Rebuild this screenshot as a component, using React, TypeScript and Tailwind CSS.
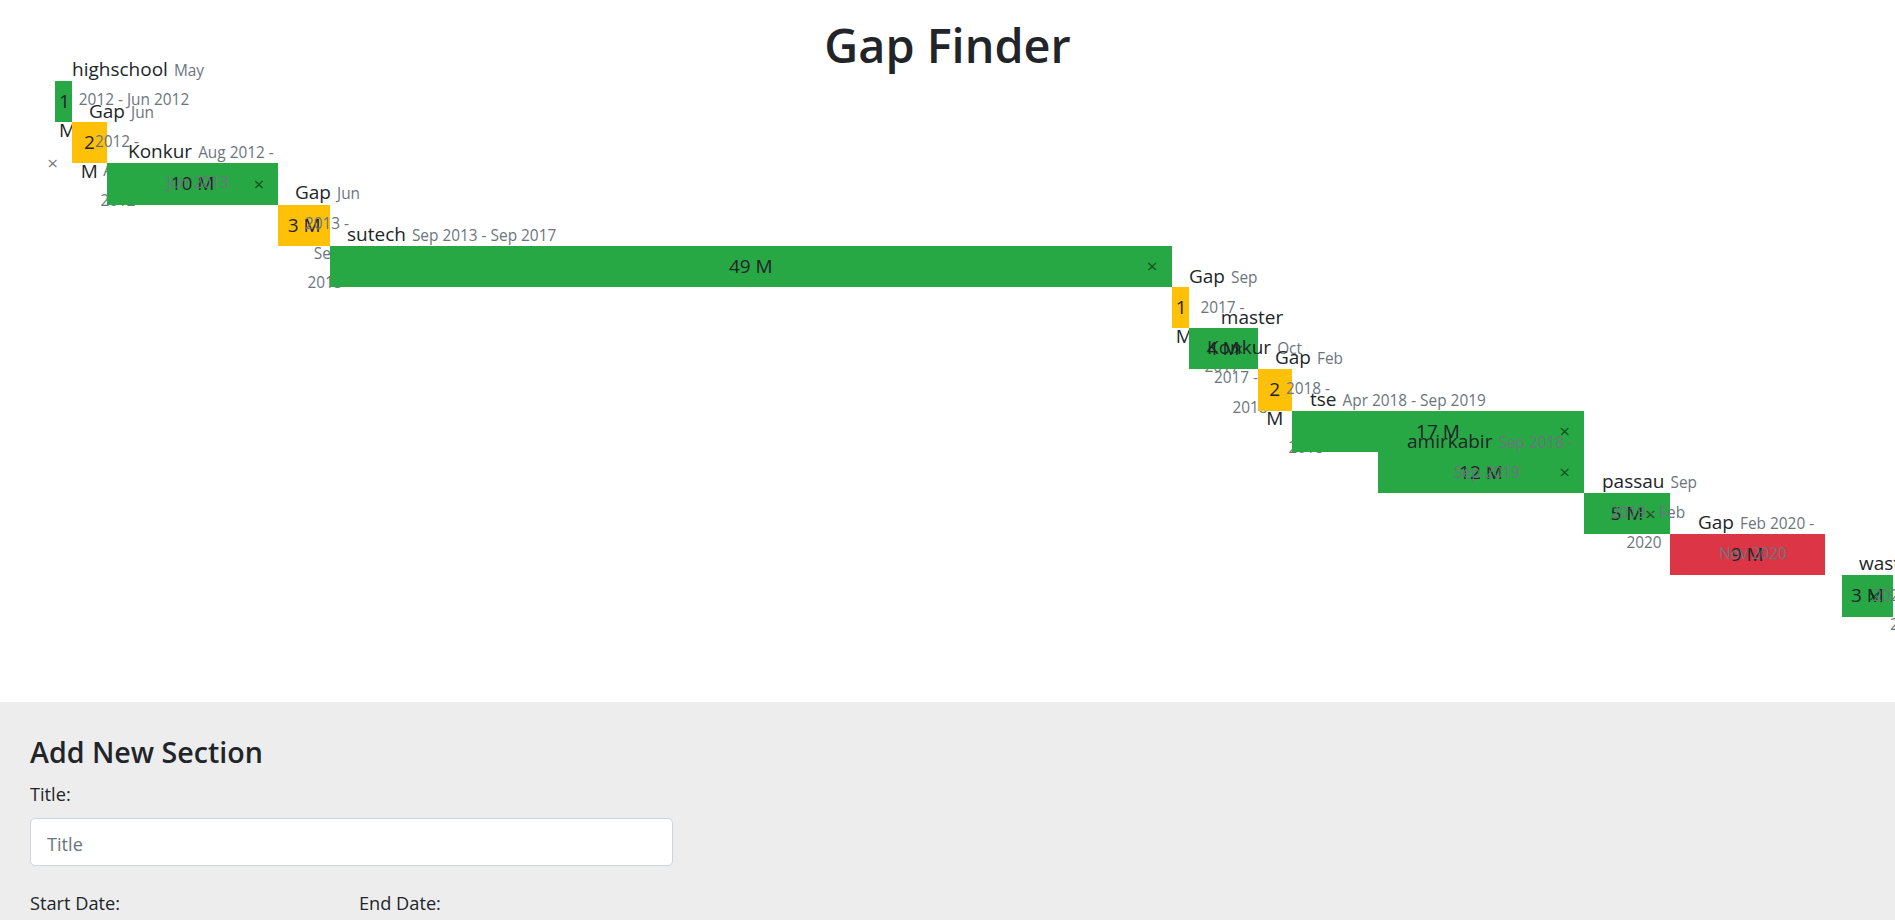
import React from 'react';

// chart scale, measured from the timeline
const PX_PER_MONTH = 17.18;
const X0 = 55;
const ROW_H = 41.2;
const ROW0 = 9; // first bar top inside the canvas
const CANVAS_TOP = 72; // canvas starts below the heading
const BASELINE = 20; // baseline offset inside a 29px line box

type Line = { x: number; y: number; center: boolean; title: string; date: string };
type Tone = 'section' | 'gap' | 'bad';
type Item = { m: number; len: number; tone: Tone; closeY?: number; lines: Line[] };

const L = (x: number, y: number, center: boolean, title: string, date: string): Line => ({
  x,
  y,
  center,
  title,
  date,
});

const ITEMS: Item[] = [
  {
    m: 0,
    len: 1,
    tone: 'section',
    closeY: 163,
    lines: [L(72, 75, false, 'highschool', 'May'), L(134, 104, true, '', '2012 - Jun 2012')],
  },
  {
    m: 1,
    len: 2,
    tone: 'gap',
    lines: [
      L(89, 117, false, 'Gap', 'Jun'),
      L(117, 146, true, '', '2012 -'),
      L(117, 175, true, '', 'Aug'),
      L(118, 205, true, '', '2012'),
    ],
  },
  {
    m: 3,
    len: 10,
    tone: 'section',
    lines: [L(128, 157, false, 'Konkur', 'Aug 2012 -'), L(197.5, 187, true, '', 'Jun 2013')],
  },
  {
    m: 13,
    len: 3,
    tone: 'gap',
    lines: [
      L(295, 198, false, 'Gap', 'Jun'),
      L(327, 228, true, '', '2013 -'),
      L(327, 258, true, '', 'Sep'),
      L(325, 287, true, '', '2013'),
    ],
  },
  {
    m: 16,
    len: 49,
    tone: 'section',
    lines: [L(347, 240, false, 'sutech', 'Sep 2013 - Sep 2017')],
  },
  {
    m: 65,
    len: 1,
    tone: 'gap',
    lines: [
      L(1189, 282, false, 'Gap', 'Sep'),
      L(1222.5, 312, true, '', '2017 -'),
      L(1222, 341, true, '', 'Oct'),
      L(1222, 371, true, '', '2017'),
    ],
  },
  {
    m: 66,
    len: 4,
    tone: 'section',
    lines: [
      L(1252, 323, true, 'master', ''),
      L(1207, 353, false, 'Konkur', 'Oct'),
      L(1251, 382, true, '', '2017 - Feb'),
      L(1250, 412, true, '', '2018'),
    ],
  },
  {
    m: 70,
    len: 2,
    tone: 'gap',
    lines: [
      L(1275, 363, false, 'Gap', 'Feb'),
      L(1308, 393, true, '', '2018 -'),
      L(1308, 422, true, '', 'Apr'),
      L(1306, 452, true, '', '2018'),
    ],
  },
  {
    m: 72,
    len: 17,
    tone: 'section',
    lines: [L(1310, 405, false, 'tse', 'Apr 2018 - Sep 2019')],
  },
  {
    m: 77,
    len: 12,
    tone: 'section',
    lines: [L(1407, 447, false, 'amirkabir', 'Sep 2018 -'), L(1487, 477, true, '', 'Sep 2019')],
  },
  {
    m: 89,
    len: 5,
    tone: 'section',
    lines: [
      L(1602, 487, false, 'passau', 'Sep'),
      L(1648, 517, true, '', '2019 - Feb'),
      L(1644, 547, true, '', '2020'),
    ],
  },
  {
    m: 94,
    len: 9,
    tone: 'bad',
    lines: [L(1698, 528, false, 'Gap', 'Feb 2020 -'), L(1753, 558, true, '', 'Nov 2020')],
  },
  {
    m: 104,
    len: 3,
    tone: 'section',
    lines: [
      L(1859, 569, false, 'wasted', 'Dec'),
      L(1873, 600, false, '', '2020 - Mar'),
      L(1890, 629, false, '', '2021'),
    ],
  },
];

const TONE_BG: Record<Tone, string> = {
  section: 'bg-[#28a745]',
  gap: 'bg-[#ffc107]',
  bad: 'bg-[#dc3545]',
};

function Label({ line }: { line: Line }) {
  return (
    <div
      className={`absolute whitespace-nowrap text-[19px] leading-[29px] text-[#212529] ${
        line.center ? '-translate-x-1/2' : ''
      }`}
      style={{ left: line.x, top: line.y - CANVAS_TOP - BASELINE }}
    >
      {line.title}
      {line.date && (
        <small className={`text-[15.4px] text-[#6c757d] ${line.title ? 'ml-[6px]' : ''}`}>
          {line.date}
        </small>
      )}
    </div>
  );
}

function TimelineItem({ item, row }: { item: Item; row: number }) {
  const top = ROW0 + row * ROW_H;
  return (
    <>
      <div
        className={`absolute px-[4px] pt-[6px] text-center text-[19px] leading-[29px] text-[#212529] ${TONE_BG[item.tone]}`}
        style={{
          left: X0 + item.m * PX_PER_MONTH,
          top,
          width: item.len * PX_PER_MONTH,
          height: ROW_H,
        }}
      >
        {item.len} M
        {item.tone === 'section' && (
          <span
            className="absolute right-[14px] -translate-y-1/2 text-[19px] leading-none text-black/55"
            style={{ top: item.closeY ? item.closeY - CANVAS_TOP - top : ROW_H / 2 }}
          >
            ×
          </span>
        )}
      </div>
      {item.lines.map((line, i) => (
        <Label key={i} line={line} />
      ))}
    </>
  );
}

export default function App() {
  return (
    <div className="h-[920px] w-full overflow-hidden bg-white font-['Open_Sans',sans-serif] text-[#212529]">
      {/* Timeline */}
      <div className="flex h-[702px] flex-col">
        <h1 className="pt-[18px] text-center text-[46.8px] font-semibold leading-[54px]">Gap Finder</h1>
        <div className="relative flex-1">
          {ITEMS.map((item, i) => (
            <TimelineItem key={i} item={item} row={i} />
          ))}
        </div>
      </div>

      {/* Form */}
      <section className="h-[218px] bg-[#ededed] px-[30px] pt-[33px]">
        <h4 className="text-[28.6px] font-semibold leading-[33px]">Add New Section</h4>
        <div className="mt-[12px] w-[643px]">
          <label className="block text-[18.2px] leading-[29px]">Title:</label>
          <input
            placeholder="Title"
            className="mt-[9px] block h-[48px] w-full rounded-[5px] border border-[#ced4da] bg-white px-[16px] pt-[3px] text-[18.2px] outline-none placeholder:text-[#6c757d]"
          />
          <div className="mt-[23px] grid grid-cols-2 gap-x-[15px]">
            <div>
              <label className="block text-[18.2px] leading-[29px]">Start Date:</label>
              <input
                type="month"
                className="mt-[8px] block h-[48px] w-full rounded-[5px] border border-[#ced4da] bg-white px-[16px] text-[18.2px]"
              />
            </div>
            <div>
              <label className="block text-[18.2px] leading-[29px]">End Date:</label>
              <input
                type="month"
                className="mt-[8px] block h-[48px] w-full rounded-[5px] border border-[#ced4da] bg-white px-[16px] text-[18.2px]"
              />
            </div>
          </div>
        </div>
      </section>
    </div>
  );
}
